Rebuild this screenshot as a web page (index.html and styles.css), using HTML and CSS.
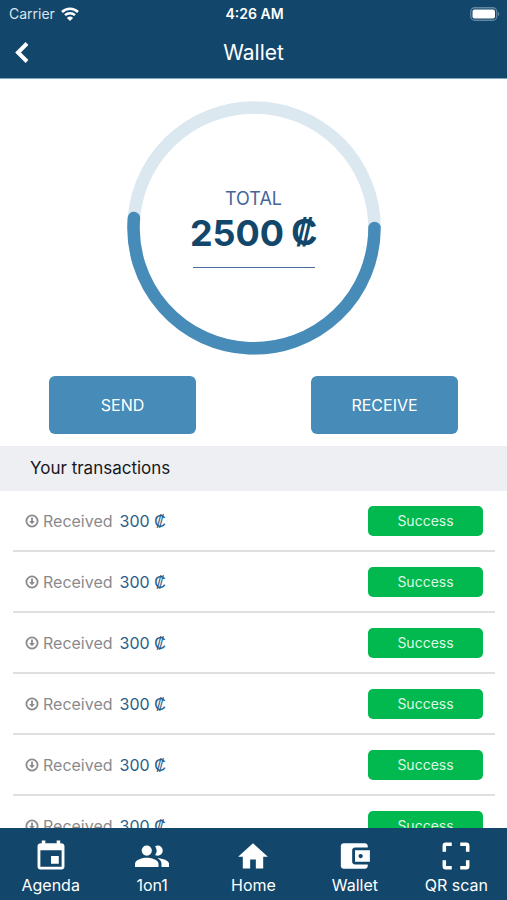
FILE: index.html
```html
<!DOCTYPE html>
<html lang="en">
<head>
<meta charset="utf-8">
<meta name="viewport" content="width=device-width, initial-scale=1">
<title>Wallet</title>
<link rel="stylesheet" href="styles.css">
</head>
<body>
<svg class="sprite" aria-hidden="true">
  <symbol id="received" viewBox="0 0 14 14">
    <circle cx="7" cy="7" r="5.600" fill="none" stroke="currentColor" stroke-width="1.800"/>
    <path d="M6.100 3.600h1.800V7h2L7 10.200 4.100 7h2z" fill="currentColor"/>
  </symbol>
</svg>
<header class="top">
  <div class="status">
    <div class="carrier">Carrier
      <svg class="wifi" viewBox="0 0 18 14" aria-hidden="true">
        <path d="M1 5a11.500 11.500 0 0 1 16 0M4 8.200a7.200 7.200 0 0 1 10 0" fill="none" stroke="currentColor" stroke-width="2.500"/>
        <path d="M9 14 5.900 10.900a4.600 4.600 0 0 1 6.200 0z" fill="currentColor"/>
      </svg>
    </div>
    <div class="clock">4:26 AM</div>
    <svg class="battery" viewBox="0 0 30 14" aria-hidden="true">
      <rect x=".75" y=".75" width="26" height="12.500" rx="4" fill="none" stroke="#6487a0" stroke-width="1.300"/>
      <rect x="2.500" y="2.500" width="22.500" height="9" rx="2" fill="#fff"/>
      <path d="M28 5a2.200 2.200 0 0 1 0 4z" fill="#6487a0"/>
    </svg>
  </div>
  <div class="bar">
    <button class="back" type="button" aria-label="Back">
      <svg viewBox="0 0 14 22" aria-hidden="true"><path d="M12 1.500 3 10.500l9 9" fill="none" stroke="currentColor" stroke-width="4"/></svg>
    </button>
    <h1>Wallet</h1>
  </div>
</header>
<main>
  <section class="balance">
    <svg class="ring" viewBox="0 0 254 254" aria-hidden="true">
      <circle cx="127" cy="127" r="120.500" fill="none" stroke="#dbe8f0" stroke-width="12.500"/>
      <path d="M6.900 117A120.500 120.500 0 1 0 247.500 127" fill="none" stroke="#478bb8" stroke-width="12.500" stroke-linecap="round"/>
    </svg>
    <div class="total">
      <div class="total-label">TOTAL</div>
      <div class="amount">2500<span class="sign">₡</span></div>
    </div>
  </section>
  <div class="actions">
    <button type="button">SEND</button>
    <button type="button">RECEIVE</button>
  </div>
  <h2>Your transactions</h2>
  <ul class="list">
    <li><svg class="in" aria-hidden="true"><use href="#received"/></svg><span>Received</span><b>300 <span class="sign">₡</span></b><span class="badge">Success</span></li>
    <li><svg class="in" aria-hidden="true"><use href="#received"/></svg><span>Received</span><b>300 <span class="sign">₡</span></b><span class="badge">Success</span></li>
    <li><svg class="in" aria-hidden="true"><use href="#received"/></svg><span>Received</span><b>300 <span class="sign">₡</span></b><span class="badge">Success</span></li>
    <li><svg class="in" aria-hidden="true"><use href="#received"/></svg><span>Received</span><b>300 <span class="sign">₡</span></b><span class="badge">Success</span></li>
    <li><svg class="in" aria-hidden="true"><use href="#received"/></svg><span>Received</span><b>300 <span class="sign">₡</span></b><span class="badge">Success</span></li>
    <li><svg class="in" aria-hidden="true"><use href="#received"/></svg><span>Received</span><b>300 <span class="sign">₡</span></b><span class="badge">Success</span></li>
  </ul>
</main>
<nav class="tabs">
  <a href="#agenda"><svg viewBox="0 0 24 24" aria-hidden="true"><path d="M17.500 12h-5.500v5.500h5.500V12zM16 1v2H8V1H5.500v2H5c-1.600 0-2.500.9-2.500 2v14.500c0 1.100.89 2 2 2h15c1.100 0 2-.9 2-2V5c0-1.100-.9-2-2.500-2h-.5V1H16zm3.500 18.500h-15V8h15v11.500z"/></svg>Agenda</a>
  <a href="#meetings"><svg viewBox="0 0 24 24" aria-hidden="true"><circle cx="8.300" cy="8.200" r="3.600"/><path d="M8.300 13.300C5.600 13.300 0 14.600 0 17.500V19.800h16.600v-2.300C16.600 14.600 11 13.300 8.300 13.300z"/><path d="M16 11.800a3.600 3.600 0 1 0 0-7.200c-.7 0-1.300.2-1.800.5a5.400 5.400 0 0 1 0 6.200c.5.300 1.100.5 1.800.5zM15.800 13.400c1.800 1 2.900 2.400 2.900 4.100v2.300H24v-2.300c0-2.400-4.400-3.700-8.200-4.100z"/></svg>1on1</a>
  <a href="#home"><svg viewBox="0 0 24 24" aria-hidden="true"><path d="M10 20.800v-6.300h4v6.300h5.200v-8.300h3.300L12 3 1.500 12.500h3.300v8.300z"/></svg>Home</a>
  <a href="#wallet"><svg viewBox="0 0 24 24" aria-hidden="true"><path d="M21 18v1c0 1.100-.9 2-2 2H4c-1.110 0-2-.9-2-2V5c0-1.100.89-2 2-2h15c1.100 0 2 .9 2 2v1h-9c-1.110 0-2 .9-2 2v8c0 1.100.89 2 2 2h9zm-9-2h10.500V8H12v8zm4-2.500c-.83 0-1.500-.67-1.500-1.500s.67-1.500 1.500-1.500 1.500.67 1.500 1.500-.67 1.500-1.500 1.500z"/></svg>Wallet</a>
  <a href="#scan"><svg viewBox="0 0 24 24" aria-hidden="true"><path d="M2.500 4.500V9H5V5h4V2.500H4.500c-1.100 0-2 .9-2 2zM5 15H2.500v4.500c0 1.100.9 2 2 2H9V19H5v-4zm14 4h-4v2.500h4.500c1.100 0 2-.9 2-2V15H19v4zm.5-16.500H15V5h4v4h2.500V4.500c0-1.100-.9-2-2-2z"/></svg>QR scan</a>
</nav>
</body>
</html>
```
FILE: styles.css
```css
* { box-sizing: border-box; }

body {
  margin: 0;
  height: 100vh;
  display: flex;
  flex-direction: column;
  background: #fff;
  font-family: Inter, "Liberation Sans", sans-serif;
}

button {
  border: 0;
  padding: 0;
  color: #fff;
  font: inherit;
}

.sprite {
  position: absolute;
  width: 0;
  height: 0;
}

.sign { font-family: "Liberation Sans", sans-serif; }

.top {
  flex: none;
  background: #12466a;
  color: #fff;
  border-bottom: 1px solid #7fa6c2;
}

.status {
  display: grid;
  grid-template-columns: 1fr auto 1fr;
  align-items: center;
  height: 27px;
  padding: 0 7px 0 9px;
  font-size: 14px;
}

.carrier {
  display: flex;
  align-items: center;
  gap: 6px;
  color: #dbe4ea;
}

.wifi {
  width: 18px;
  height: 14px;
  color: #fff;
}

.clock { font-weight: 600; }

.battery {
  width: 30px;
  height: 14px;
  justify-self: end;
}

.bar {
  display: grid;
  grid-template-columns: 44px 1fr 44px;
  align-items: center;
  height: 51px;
}

.back {
  display: flex;
  align-items: center;
  justify-content: center;
  height: 44px;
  background: none;
}

.back svg {
  width: 14px;
  height: 22px;
}

h1 {
  margin: 0;
  font-size: 21px;
  font-weight: 400;
  text-align: center;
}

main {
  flex: 1;
  min-height: 0;
  overflow: hidden;
}

.balance {
  display: grid;
  justify-items: center;
  padding: 22px 0 21px;
}

.ring,
.total { grid-area: 1 / 1; }

.ring {
  display: block;
  width: 254px;
  height: 254px;
}

.total {
  display: flex;
  flex-direction: column;
  align-items: center;
  align-self: start;
  margin-top: 86px;
}

.total::after {
  content: "";
  width: 122px;
  height: 1px;
  margin-top: 12px;
  background: #4a6a9a;
}

.total-label {
  color: #44659a;
  font-size: 18px;
  line-height: 24px;
}

.amount {
  display: flex;
  gap: 7px;
  color: #12466a;
  font-size: 36px;
  font-weight: 700;
  line-height: 44px;
}

.actions {
  display: flex;
  justify-content: space-between;
  padding: 0 49px 12px;
}

.actions button {
  width: 147px;
  height: 58px;
  border-radius: 6px;
  background: #478bb8;
  font-size: 16px;
}

h2 {
  margin: 0;
  padding: 0 30px;
  background: #eeeff3;
  color: #18181b;
  font-size: 17px;
  font-weight: 400;
  line-height: 45px;
}

.list {
  margin: 0 12px 0 13px;
  padding: 0;
  list-style: none;
}

.list li {
  display: flex;
  align-items: center;
  gap: 4px;
  height: 61px;
  padding: 0 12px;
  border-bottom: 2px solid #dfdfe1;
  color: #8a8a8c;
  font-size: 16px;
}

.list b {
  margin-left: 3px;
  color: #2a5d88;
  font-weight: 400;
}

.in {
  width: 14px;
  height: 14px;
}

.badge {
  width: 115px;
  margin-left: auto;
  border-radius: 5px;
  background: #02b94f;
  color: #dcf8e4;
  font-size: 14px;
  line-height: 30px;
  text-align: center;
}

.tabs {
  flex: none;
  display: grid;
  grid-template-columns: repeat(5, 1fr);
  height: 72px;
  padding-top: 11px;
  background: #12466a;
}

.tabs a {
  display: flex;
  flex-direction: column;
  align-items: center;
  color: #fff;
  font-size: 16px;
  line-height: 24px;
  text-decoration: none;
}

.tabs svg {
  width: 34px;
  height: 34px;
  fill: #fff;
}
```
